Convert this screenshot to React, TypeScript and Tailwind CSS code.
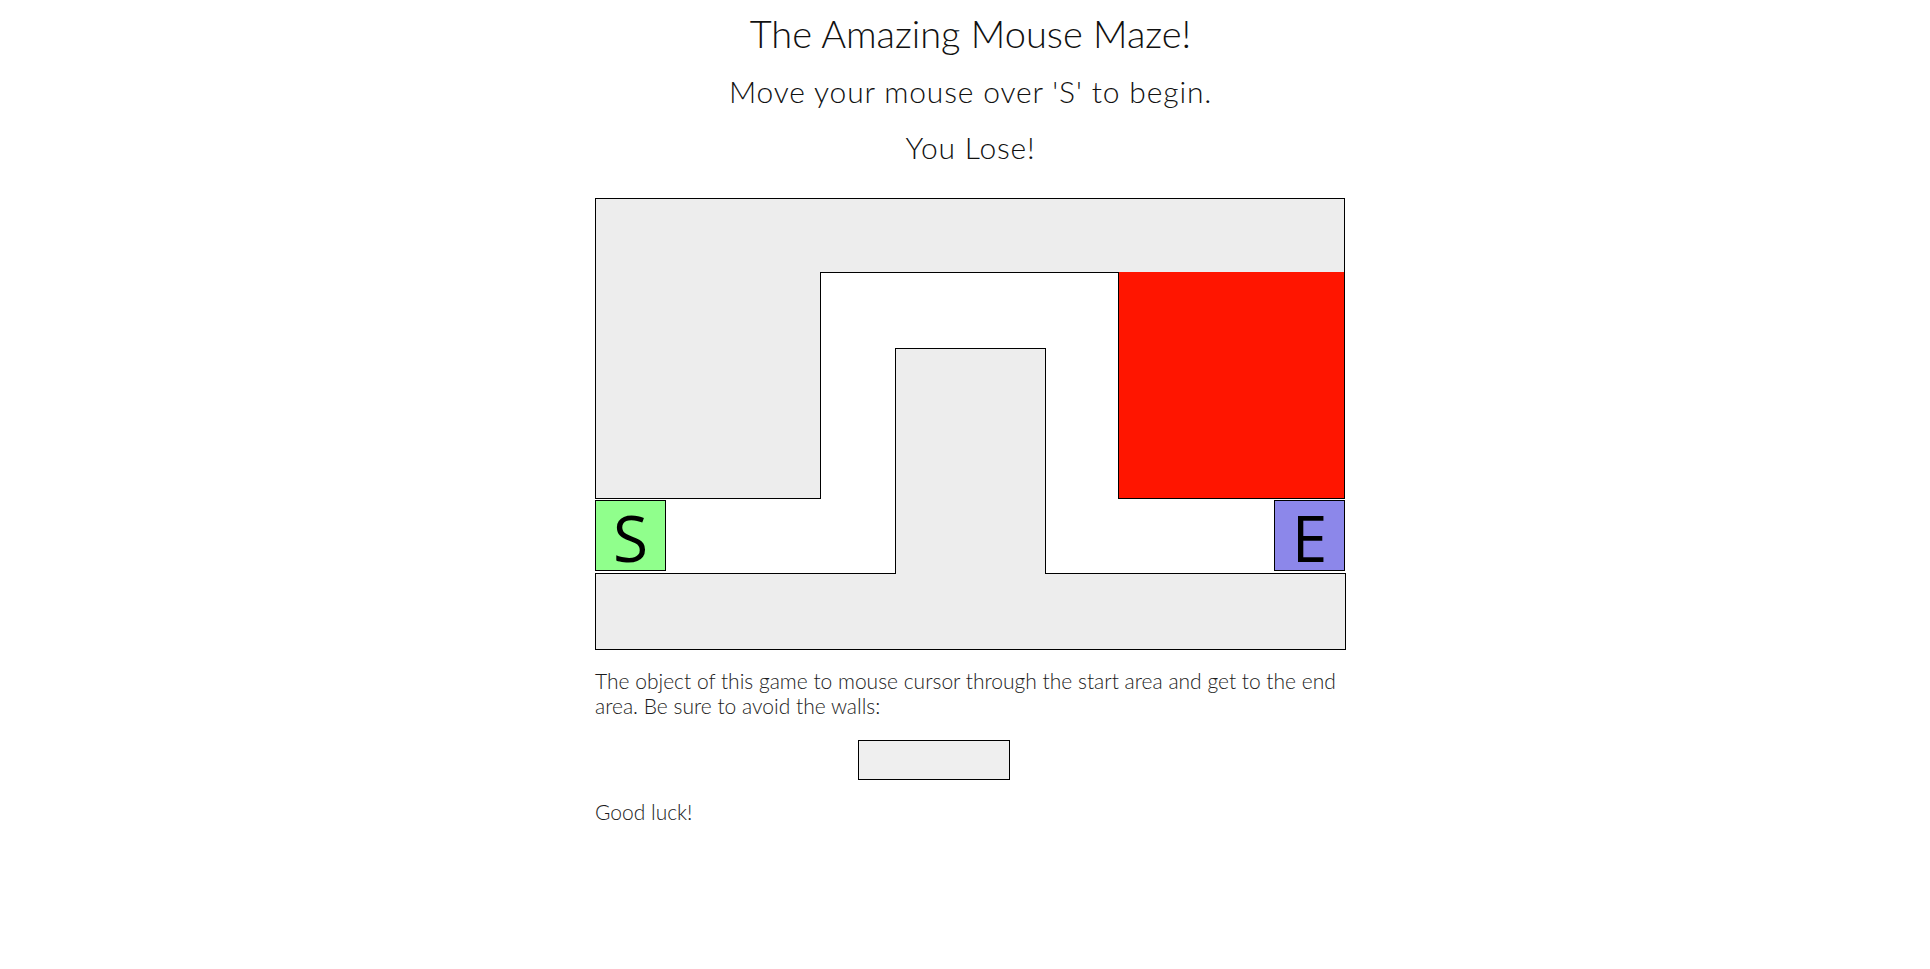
import React from "react";

const light = { fontFamily: "Lato, 'Open Sans', 'Noto Sans', sans-serif" };
const letter = { fontFamily: "'Open Sans', 'Noto Sans', sans-serif" };

export default function App() {
  return (
    <div className="flex min-h-screen justify-center bg-white pl-[11px] text-[#111]">
      <div className="flex w-[751px] flex-col pt-[9px] font-light" style={light}>
        <h1 className="text-center text-[38px] leading-[48px] font-light">The Amazing Mouse Maze!</h1>
        <h2 className="mt-[14px] text-center text-[30px] leading-[40px] font-light tracking-[0.85px]">
          Move your mouse over 'S' to begin.
        </h2>
        <h2 className="mt-[16px] text-center text-[30px] leading-[40px] font-light tracking-[0.85px]">You Lose!</h2>

        <div className="mt-[31px] grid grid-cols-[71px_155px_74px_151px_72px_156px_71px_1px] grid-rows-[74px_1px_75px_151px_1px_71px_2px_1px_76px]">
          <div className="col-start-1 col-end-8 row-start-1 row-end-3 border border-black bg-[#ededed]" />
          <div className="col-start-1 col-end-3 row-start-2 row-end-5 border-x border-b border-black bg-[#ededed]" />
          <div className="col-start-6 col-end-8 row-start-2 row-end-5 border-x border-b border-black bg-[#ff1500]" />
          <div className="col-start-1 col-end-9 row-start-8 row-end-10 border border-black bg-[#ededed]" />
          <div className="col-start-4 col-end-5 row-start-4 row-end-9 border-x border-t border-black bg-[#ededed]" />
          <div
            className="col-start-1 col-end-2 row-start-6 row-end-7 border border-black bg-[#90ff8c] pt-[6px] text-center text-[64px] leading-[62px] font-normal text-black"
            style={letter}
          >
            S
          </div>
          <div
            className="col-start-7 col-end-8 row-start-6 row-end-7 border border-black bg-[#8c87ea] pt-[6px] text-center text-[64px] leading-[62px] font-normal text-black"
            style={letter}
          >
            E
          </div>
        </div>

        <p className="mt-[18px] text-[21px] leading-[25px] font-light text-[#1c1c1c]">
          <span className="whitespace-nowrap">The object of this game to mouse cursor through the start area and get to the end</span>
          <br />
          <span className="whitespace-nowrap">area. Be sure to avoid the walls:</span>
        </p>
        <div className="ml-[263px] mt-[22px] h-[40px] w-[152px] border border-black bg-[#efefef]" />
        <p className="mt-[19px] text-[21px] leading-[25px] font-light text-[#1c1c1c]">Good luck!</p>
      </div>
    </div>
  );
}
